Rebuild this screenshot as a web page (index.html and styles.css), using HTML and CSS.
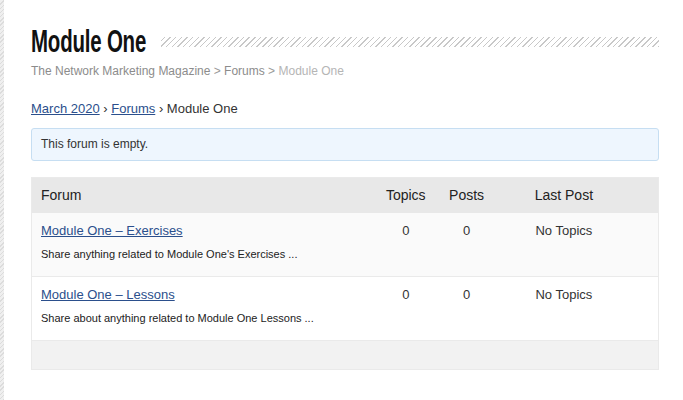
FILE: index.html
```html
<!DOCTYPE html>
<html lang="en">
<head>
<meta charset="utf-8">
<title>Module One</title>
<link rel="stylesheet" href="styles.css">
</head>
<body>
<div class="page">
  <aside class="edge"></aside>
  <main class="content">
    <header class="title-bar">
      <h1 class="title"><span class="title-text">Module One</span></h1>
      <span class="hatch"></span>
    </header>
    <nav class="site-crumbs">
      <a href="#">The Network Marketing Magazine</a> &gt; <a href="#">Forums</a> &gt; <span class="current">Module One</span>
    </nav>
    <nav class="forum-crumbs">
      <a href="#">March 2020</a> › <a href="#">Forums</a> › <span>Module One</span>
    </nav>
    <div class="notice">This forum is empty.</div>
    <section class="forums">
      <div class="row head">
        <div class="c-info">Forum</div>
        <div class="c-num">Topics</div>
        <div class="c-num">Posts</div>
        <div class="c-fresh">Last Post</div>
      </div>
      <div class="row item odd">
        <div class="c-info">
          <a href="#" class="forum-link">Module One – Exercises</a>
          <p class="desc">Share anything related to Module One's Exercises ...</p>
        </div>
        <div class="c-num">0</div>
        <div class="c-num">0</div>
        <div class="c-fresh">No Topics</div>
      </div>
      <div class="row item even">
        <div class="c-info">
          <a href="#" class="forum-link">Module One – Lessons</a>
          <p class="desc">Share about anything related to Module One Lessons ...</p>
        </div>
        <div class="c-num">0</div>
        <div class="c-num">0</div>
        <div class="c-fresh">No Topics</div>
      </div>
      <div class="row foot"></div>
    </section>
  </main>
</div>
</body>
</html>
```

FILE: styles.css
```css
html, body {
  margin: 0;
  padding: 0;
  background: #fff;
}
body {
  font-family: "Liberation Sans", Arial, sans-serif;
  color: #333;
}
.page {
  display: flex;
  min-height: 400px;
}
.edge {
  width: 4px;
  flex: none;
  background: repeating-linear-gradient(-45deg, #dcdcdc 0 1px, #efefef 1px 3px);
}
.content {
  flex: 1;
  padding: 23px 24px 0 27px;
}
.title-bar {
  display: flex;
  align-items: center;
  gap: 16px;
}
.title {
  margin: 0;
  width: 114px;
  flex: none;
  font-family: "Liberation Sans", sans-serif;
  font-weight: 700;
  font-size: 31px;
  line-height: 38px;
  color: #111;
  white-space: nowrap;
}
.title-text {
  display: inline-block;
  letter-spacing: -0.3px;
  transform: scale(0.66, 1.02);
  transform-origin: left center;
}
.hatch {
  flex: 1;
  height: 10px;
  margin-top: 0;
  background: repeating-linear-gradient(-45deg, #c8c8c8 0 1px, transparent 1px 4px);
}
.site-crumbs {
  margin-top: 2px;
  font-size: 12px;
  line-height: 16px;
  color: #999;
}
.site-crumbs a {
  color: #8c8c8c;
  text-decoration: none;
}
.site-crumbs .current {
  color: #b5b5b5;
}
.forum-crumbs {
  margin-top: 21px;
  font-size: 13px;
  line-height: 18px;
  color: #333;
}
.forum-crumbs a {
  color: #2b4f8c;
}
.notice {
  margin-top: 10px;
  background: #eef6fe;
  border: 1px solid #c6def2;
  border-radius: 3px;
  padding: 9px 9px;
  font-size: 12px;
  line-height: 13px;
  color: #333;
}
.forums {
  margin-top: 16px;
  border: 1px solid #eaeaea;
}
.row {
  display: flex;
  padding: 0 9px;
}
.c-info { width: 55%; }
.c-num { width: 10%; text-align: center; }
.c-fresh { width: 22%; text-align: center; }
.head {
  background: #e8e8e8;
  font-size: 14px;
  line-height: 18px;
  padding-top: 8px;
  padding-bottom: 9px;
  color: #222;
}
.item {
  font-size: 13px;
  line-height: 16px;
  padding-top: 10px;
  padding-bottom: 14px;
  border-top: 1px solid #eaeaea;
  color: #333;
}
.item.odd { background: #fafafa; border-top: none; }
.item.even { background: #fff; }
.forum-link {
  color: #2b4f8c;
}
.desc {
  margin: 8px 0 0;
  font-size: 11px;
  line-height: 15px;
  color: #222;
}
.foot {
  height: 28px;
  background: #f2f2f2;
  border-top: 1px solid #eaeaea;
}
```
